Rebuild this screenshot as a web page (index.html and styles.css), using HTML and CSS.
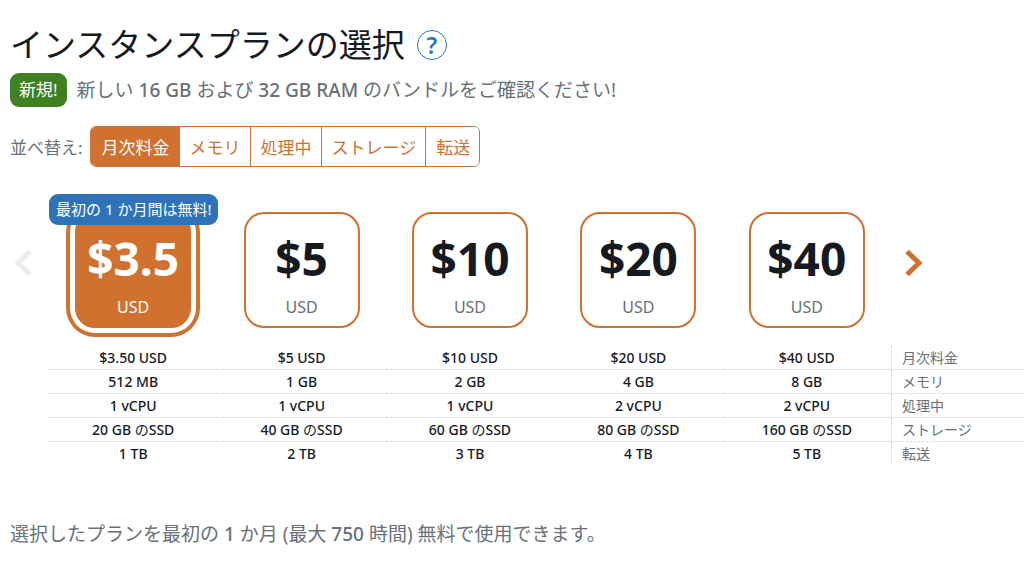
FILE: index.html
```
<!DOCTYPE html>
<html lang="ja">
<head>
  <meta charset="UTF-8">
  <meta name="viewport" content="width=device-width, initial-scale=1.0">
  <title>インスタンスプランの選択</title>
  <link rel="stylesheet" href="styles.css">
</head>
<body>
  <header>
    <div class="title">
      <h1>インスタンスプランの選択</h1>
      <button type="button" class="help" aria-label="ヘルプ">?</button>
    </div>
    <div class="news">
      <span class="new-label">新規!</span>
      <p>新しい <b>16 GB</b> および <b>32 GB RAM</b> のバンドルをご確認ください!</p>
    </div>
  </header>

  <div class="sort">
    <span id="sort-label">並べ替え:</span>
    <div class="sort-buttons" role="group" aria-labelledby="sort-label">
      <button type="button" class="active" aria-pressed="true">月次料金</button>
      <button type="button">メモリ</button>
      <button type="button">処理中</button>
      <button type="button">ストレージ</button>
      <button type="button">転送</button>
    </div>
  </div>

  <div class="plans">
    <button type="button" class="arrow prev" aria-label="前へ" disabled>
      <svg width="20" height="28" viewBox="0 0 20 28"><path d="M18 2.500 6 14l12 11.500" /></svg>
    </button>
    <div class="plan">
      <button type="button" class="card selected" aria-pressed="true"><b>$3.5</b><span>USD</span></button>
      <span class="free">最初の 1 か月間は無料!</span>
    </div>
    <div class="plan">
      <button type="button" class="card"><b>$5</b><span>USD</span></button>
    </div>
    <div class="plan">
      <button type="button" class="card"><b>$10</b><span>USD</span></button>
    </div>
    <div class="plan">
      <button type="button" class="card"><b>$20</b><span>USD</span></button>
    </div>
    <div class="plan">
      <button type="button" class="card"><b>$40</b><span>USD</span></button>
    </div>
    <button type="button" class="arrow next" aria-label="次へ">
      <svg width="20" height="28" viewBox="0 0 20 28"><path d="M4 2.500 16 14 4 25.500" /></svg>
    </button>
  </div>

  <div class="specs">
    <table>
      <tr><td>$3.50 USD</td><td>$5 USD</td><td>$10 USD</td><td>$20 USD</td><td>$40 USD</td><th scope="row">月次料金</th></tr>
      <tr><td>512 MB</td><td>1 GB</td><td>2 GB</td><td>4 GB</td><td>8 GB</td><th scope="row">メモリ</th></tr>
      <tr><td>1 vCPU</td><td>1 vCPU</td><td>1 vCPU</td><td>2 vCPU</td><td>2 vCPU</td><th scope="row">処理中</th></tr>
      <tr><td>20 GB <span>の</span>SSD</td><td>40 GB <span>の</span>SSD</td><td>60 GB <span>の</span>SSD</td><td>80 GB <span>の</span>SSD</td><td>160 GB <span>の</span>SSD</td><th scope="row">ストレージ</th></tr>
      <tr><td>1 TB</td><td>2 TB</td><td>3 TB</td><td>4 TB</td><td>5 TB</td><th scope="row">転送</th></tr>
    </table>
  </div>

  <p class="note">選択したプランを最初の <b>1</b> か月 (最大 <b>750</b> 時間) 無料で使用できます。</p>
</body>
</html>
```
FILE: styles.css
```
* {
  box-sizing: border-box;
}
body {
  margin: 0;
  padding-top: 24px;
  background: #fff;
  color: #16191f;
  font-family: "Noto Sans", "Noto Sans CJK JP", sans-serif;
}
button {
  font-family: inherit;
  cursor: pointer;
}
.title {
  display: flex;
  align-items: center;
  gap: 12px;
  padding-left: 10px;
}
h1 {
  margin: 0;
  font-size: 33px;
  font-weight: 400;
  line-height: 42px;
}
.help {
  width: 30px;
  height: 30px;
  padding: 0;
  border: 1px solid #2e73b8;
  border-radius: 50%;
  background: none;
  color: #2e73b8;
  font-size: 23px;
  font-weight: 600;
  line-height: 28px;
}
.news {
  display: flex;
  align-items: center;
  gap: 10px;
  margin: 7px 0 0 10px;
  color: #687078;
  font-size: 19px;
  line-height: 34px;
}
.news p {
  margin: 0;
}
.news b, .note b {
  font-weight: 500;
}
.new-label {
  padding: 0 9px;
  border-radius: 9px;
  background: #3f8023;
  color: #fff;
  font-size: 17px;
}
.sort {
  display: flex;
  align-items: center;
  gap: 7px;
  margin: 19px 0 0 10px;
  color: #687078;
  font-size: 17px;
}
.sort-buttons {
  display: flex;
  border: 1px solid #d0712f;
  border-radius: 6px;
  overflow: hidden;
}
.sort-buttons button {
  height: 39px;
  padding: 0 9px 0 10px;
  border: 0;
  border-left: 1px solid #d0712f;
  background: #fff;
  color: #d0712f;
  font-size: 17px;
}
.sort-buttons .active {
  background: #d0712f;
  color: #fff;
}
.plans {
  display: grid;
  grid-template-columns: 49px repeat(5, 1fr) 133px;
  margin-top: 45px;
}
.plan {
  position: relative;
  display: flex;
  justify-content: center;
}
.card {
  display: flex;
  flex-direction: column;
  align-items: center;
  width: 116px;
  height: 116px;
  padding: 14px 0 0;
  border: 2px solid #d0712f;
  border-radius: 20px;
  background: #fff;
  color: #16191f;
}
.card b {
  font-size: 46px;
  line-height: 60px;
}
.card span {
  margin-top: 7px;
  color: #687078;
  font-size: 16px;
  line-height: 24px;
}
.card.selected {
  background: #d0712f;
  color: #fff;
  box-shadow: 0 0 0 5px #fff, 0 0 0 9px #d0712f;
}
.card.selected span {
  color: #fff;
}
.free {
  position: absolute;
  top: -18px;
  left: 0;
  padding: 0 7px;
  border-radius: 9px;
  background: #2e73b8;
  color: #fff;
  font-size: 15px;
  line-height: 31px;
  white-space: nowrap;
}
.arrow {
  display: flex;
  align-items: center;
  padding: 0 12px;
  border: 0;
  background: none;
  color: #d0712f;
}
.arrow svg {
  margin-top: -14px;
  fill: none;
  stroke: currentColor;
  stroke-width: 5;
}
.arrow:disabled {
  color: #eaeded;
}
.specs {
  margin: 18px 0 0 49px;
}
table {
  width: 100%;
  border-spacing: 0;
  table-layout: fixed;
}
td, th {
  height: 24px;
  padding: 0;
  border-bottom: 1px dotted #ccd2d2;
  font-size: 14px;
  line-height: 23px;
  text-align: center;
}
td {
  font-weight: 500;
}
td span {
  font-weight: 400;
}
th {
  width: 133px;
  padding-left: 10px;
  border-left: 1px dotted #ccd2d2;
  color: #687078;
  font-weight: 400;
  text-align: left;
}
tr:last-child td, tr:last-child th {
  border-bottom-color: transparent;
}
.note {
  margin: 51px 0 0 10px;
  color: #687078;
  font-size: 19px;
  line-height: 34px;
}
```
